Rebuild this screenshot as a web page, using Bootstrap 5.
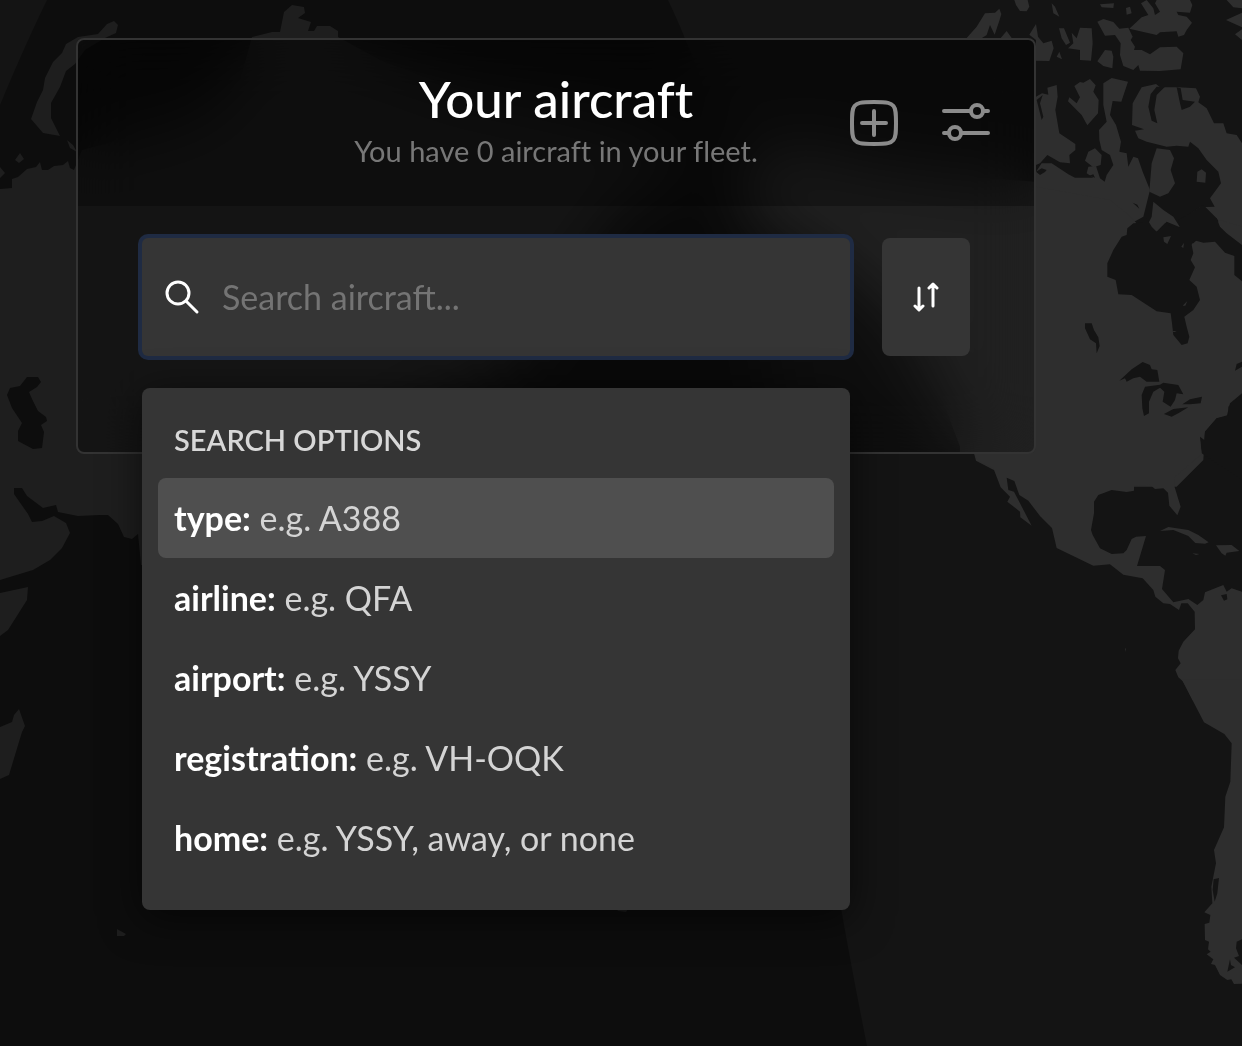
<!DOCTYPE html>
<html lang="en">
<head>
<meta charset="utf-8">
<meta name="viewport" content="width=device-width, initial-scale=1">
<title>Your aircraft</title>
<link href="https://cdn.jsdelivr.net/npm/bootstrap@5.3.0/dist/css/bootstrap.min.css" rel="stylesheet">
<style>
body{background:#141414;color:#fff;font-family:Lato,"Noto Sans",sans-serif;font-size:34px;line-height:40px;font-variant-ligatures:none}
.world{z-index:-1}
.world .land{fill:#2e2e2e}
.world .sea{fill:#141414}
.stage{padding:38px 76px}
.fleet{max-width:960px;border:2px solid #333;border-radius:8px;background:rgba(0,0,0,.3);backdrop-filter:blur(30px)}
.fleet-head{display:grid;grid-template-columns:1fr auto 1fr;min-height:166px;padding:0 44px;background:rgba(0,0,0,.3);border-radius:6px 6px 0 0}
.fleet-name{grid-column:2}
.fleet-title{font-size:51px;line-height:64px;font-weight:500}
.fleet-sub{font-size:29px;line-height:40px;color:#777}
.tool{width:48px;height:48px;padding:0;border:0;color:#8b8b8b}
.tools{gap:44px}
.fleet-body{padding:32px 64px 96px;gap:32px}
.finder{height:118px;padding:0 24px;gap:24px;background:#353535;border-radius:6px;box-shadow:0 0 0 4px #1f2b43}
.finder input,.finder input:focus{background:none;border:0;box-shadow:none;color:#fff;font-size:34px;line-height:40px;padding:0}
.finder input::placeholder{color:#747474;opacity:1}
.sorter{width:88px;height:118px;padding:0;background:#353535;border:0;border-radius:8px;color:#fff}
.options{top:100%;margin-top:32px;padding:32px 16px;background:#353535;border-radius:8px;box-shadow:0 8px 40px rgba(0,0,0,.6)}
.options-title{font-size:29px;line-height:40px;font-weight:600;color:#d8d8d8;padding:0 16px;margin-bottom:18px}
.option{height:80px;padding:0 16px;border:0;border-radius:8px!important;background:none;color:#d4d4d4}
.option b{color:#fff;font-weight:700}
.option.active{background:#4f4f4f;color:#d4d4d4}
</style>
</head>
<body class="min-vh-100 overflow-hidden">
<svg class="world position-fixed top-0 start-0 w-100 h-100" viewBox="0 0 1242 1046" preserveAspectRatio="xMinYMin slice" aria-hidden="true">
  <rect class="sea" width="1242" height="1046"/>
  <!-- Eurasia and Africa -->
  <g class="land">
    <path d="M0 189L12 188 12 179 18 177 27 169 36 167 40 162 42 170 48 170 54 166 63 165 68 161 70 168 74 170 82 150 120 140 200 120 240 80 252 37 272 32 280 32 284 12 292 5 304 7 305 13 298 18 311 22 308 31 314 31 317 26 330 26 338 31 338 37 380 60 460 90 560 110 640 130 690 150 680 180 620 200 600 240 570 270 540 330 490 380 440 400 400 420 330 480 280 560 200 570 141 565 138 534 132 539 124 537 118 524 108 515 100 515 78 516 58 512 56 505 43 508 27 496 22 488 14 488 14 494 28 514 32 522 42 521 54 516 66 523 70 533 62 548 50 560 33 570 0 580Z"/>
    <path d="M0 593L28 587 27 600 8 630 0 636ZM0 727L12 722 14 715 19 709 25 726 22 732 9 775 0 779Z"/>
    <path d="M78 37L98 34 107 24 114 21 118 25 116 33 105 38 85 50 75 64 66 71 60 87 51 103 51 118 60 136 43 133 31 119 37 102 43 90 45 78 53 62 62 53 66 44ZM67 140L73 145 77 152 70 148ZM15 160L20 153 24 159 19 163ZM0 167L5 173 0 178Z"/>
    <path d="M117 929L126 934 124 936 117 936ZM614 906L630 906 626 912 618 911Z"/>
  </g>
  <path class="sea" d="M27 377L38 377 41 382 37 387 29 392 32 399 38 411 46 417 47 421 41 425 44 432 42 448 33 449 18 441 18 431 22 423 12 408 7 395 10 388 20 386Z"/>
  <!-- North America, arctic coast and Baffin -->
  <g transform="translate(960 0) scale(.33333)">
    <g class="land">
      <path d="M-660 620L-640 500-500 430-300 490 0 530 228 545 228 515 245 490 275 490 325 523 345 533 400 533 380 520 385 500 408 498 420 535 434 545 440 525 460 495 450 465 425 450 418 420 417 390 440 365 430 315 430 250 455 234 504 245 484 305 458 303 450 345 468 375 483 425 478 455 500 460 505 500 520 470 534 475 548 515 570 570 550 650 505 675 480 720 440 800 440 890 0 1340-60 1180-180 960-390 770Z"/>
      <path d="M228 290L246 280 265 284 262 263 290 255 293 290 286 330 298 400 346 432 346 450 328 465 330 490 300 487 262 465 240 490 228 495Z"/>
      <path d="M343 258L360 246 370 248 390 237 407 256 400 275 416 300 414 340 382 376 365 345 324 304 328 292 350 310 360 292Z"/>
      <path d="M588 252L545 262 518 310 516 375 552 388 525 392 535 415 560 425 620 440 650 437 685 440 690 425 715 445 740 480 775 515 783 550 750 595 764 620 720 622 693 640 705 656 770 655 790 690 805 720 846 770 846 430 830 405 800 400 790 370 762 370 740 325 715 307 720 290 708 265 655 262 600 262Z"/>
      <path d="M590 445L630 450 642 475 632 510 645 550 625 580 600 590 568 575 575 490ZM580 605L610 630 640 650 660 682 620 665 590 695 560 680 575 650ZM712 515L725 508 738 518 736 548 710 545ZM385 455L405 445 425 465 422 495 400 502 375 482Z"/>
      <path d="M20 114L50 80 75 40 105 38 118 26 124 42 118 62 104 104 90 75 80 105 60 118 20 118ZM122 114L140 93 155 114ZM163 0L203 0 208 20 200 34 180 33 168 15ZM275 10L285 20 298 50 280 40ZM208 104L228 72 234 110 250 130 275 122 281 145 268 183 228 182 228 120ZM290 170L298 155 306 178ZM297 85L312 85 330 128 318 135 305 115ZM335 98L350 115 360 83 395 85 398 130 393 182 360 180 360 150 324 145 340 130Z"/>
      <path d="M412 65L430 57 460 66 478 86 505 83 518 110 512 120 525 140 522 150 545 150 570 163 600 142 650 140 670 160 662 208 600 213 540 212 535 195 520 210 490 198 480 165 482 130 465 105 435 107ZM412 184L435 150 455 152 460 170 457 205 430 198ZM420 13L462 10 460 24 425 22ZM498 24L510 20 515 40 500 44Z"/>
      <path d="M543 10L560 0 580 25 585 45 600 35 585 10 590 0 690 0 697 15 690 38 650 35 655 45 680 50 696 68 680 90 672 105 655 110 650 94 600 97 590 105 508 86 545 52 565 45ZM800 0L846 0 846 25 820 22ZM798 60L846 38 846 82ZM825 103L846 88 846 120Z"/>
    </g>
    <g class="sea">
      <path d="M590 260L615 260 590 285 583 330 592 370 575 362 565 320 572 282ZM650 262L662 265 668 300 705 305 690 320 665 330 660 310ZM228 515L245 505 260 510 255 516 240 525ZM388 527L400 523 405 533ZM518 608L532 614 538 626ZM248 285L240 310 250 350 245 360 230 300Z"/>
    </g>
  </g>
  <!-- North America, Hudson Bay and the Great Lakes -->
  <g transform="translate(960 220) scale(.33333)">
    <path class="land" d="M228-100L450-60 500-20 600 80 700 70 780 0 846 20 846 520 810 550 800 590 770 595 735 635 730 720 650 800 300 800 100 749 48 722 42 700 0 700 0 100Z"/>
    <g class="sea">
      <path d="M500 45L502 25 520 10 545 8 560-5 575 20 590 35 615 10 640 22 660 22 655 0 690-20 730-45 770-5 780 20 800 40 846 75 846 184 823 165 823 108 795 98 765 65 730 68 700 60 695 75 700 100 692 120 705 142 688 180 710 200 720 240 700 270 673 290 680 320 688 350 683 370 665 375 640 345 636 310 632 280 590 274 515 225 475 223 467 180 442 170 442 130 460 90 485 50Z"/>
      <path d="M375 310L395 310 402 330 415 352 419 378 410 400 408 370 390 358 375 325ZM478 482L515 448 548 426 570 435 575 448 592 450 598 485 560 485 540 470 520 475 500 485 495 475ZM545 525L555 500 600 494 610 488 655 495 670 523 650 520 645 540 632 560 608 545 613 515 600 503 580 515 567 545 567 580 552 588 547 565ZM667 553L690 538 726 530 722 550 690 553ZM612 582L640 567 685 562 655 580 635 590ZM825 452L830 432 846 425 846 440ZM846 525L825 540 805 560 805 585 770 595 735 635 733 660 720 650 725 700 846 780Z"/>
    </g>
    <path class="land" d="M610 52L633 48 622 72 612 65ZM664 80L672 68 670 84ZM668 257L682 243 676 257ZM636 333L650 333 642 337Z"/>
  </g>
  <!-- Mexico, the Caribbean and Colombia -->
  <g transform="translate(960 440) scale(.33333)">
    <g class="land">
      <path d="M42 40L54 62 100 85 122 142 150 170 142 185 180 215 181 232 215 257 180 190 162 155 145 150 140 113 163 123 178 165 205 182 240 228 276 264 290 324 400 377 450 373 490 404 548 415 580 450 586 470 610 490 630 492 657 510 664 490 683 490 704 515 705 568 670 605 656 632 654 655 662 670 646 690 655 712 670 725 698 780 846 780 846 455 815 445 800 455 790 435 735 457 730 480 712 495 685 477 640 487 606 447 615 390 600 378 531 378 558 288 528 290 515 297 500 330 490 340 455 342 420 325 398 285 393 270 402 220 402 185 415 165 455 150 500 156 522 152 522 138 570 134 585 147 610 145 624 158 628 197 652 226 662 200 642 135 645 110 725 42 720 0 42 0Z"/>
      <path d="M600 273L625 261 685 270 715 285 746 307 735 311 706 309 685 288 640 270ZM768 316L815 315 838 333 800 338 796 347 785 340ZM697 340L718 342 708 345ZM495 625L498 626 497 636Z"/>
    </g>
    <path class="sea" d="M783 466L800 462 802 478 792 482Z"/>
  </g>
  <!-- South America, Pacific coast -->
  <g transform="translate(1120 680) scale(.33333)">
    <path class="land" d="M185-2L220 65 252 127 313 162 335 190 331 305 316 350 312 442 282 510 288 550 274 620 277 670 253 697 271 705 268 728 254 732 255 780 267 785 264 808 272 815 260 823 280 838 273 852 285 855 300 885 322 900 334 898 342 912 366 911 366-2Z"/>
    <path class="sea" d="M281 598L297 594 292 640 284 665 278 630ZM366 778L350 785 348 805 357 828 342 833 366 855ZM330 838L333 855 345 862 322 875Z"/>
  </g>
  <!-- Night side of the terminator -->
  <path d="M47 0L668 0C740 150 785 400 800 600C812 750 838 900 867 1046L0 1046 0 105Q25 45 47 0Z" fill-opacity=".35"/>
</svg>

<main class="stage">
  <section class="fleet w-100">
    <header class="fleet-head align-items-center">
      <div class="fleet-name text-center pb-2">
        <h1 class="fleet-title m-0">Your aircraft</h1>
        <p class="fleet-sub m-0">You have 0 aircraft in your fleet.</p>
      </div>
      <div class="tools d-flex justify-content-end">
        <button class="btn tool d-flex" type="button" aria-label="Add aircraft">
          <svg width="48" height="48" fill="none" stroke="currentColor" stroke-width="4" stroke-linecap="round"><path d="M24 3C38 3 41 4 43.500 7S46 15 46 24 46 38 43.500 41 38 45 24 45 7 44 4.500 41 2 33 2 24 2 10 4.500 7 10 3 24 3ZM24 12V36M12 24H36"/></svg>
        </button>
        <button class="btn tool d-flex" type="button" aria-label="Filters">
          <svg width="48" height="48" fill="none" stroke="currentColor" stroke-width="4" stroke-linecap="round"><path d="M2 12H29M41 12H46M2 34H7M19 34H46"/><circle cx="35" cy="12" r="6"/><circle cx="13" cy="34" r="6"/></svg>
        </button>
      </div>
    </header>
    <div class="fleet-body d-flex">
      <div class="position-relative flex-grow-1">
        <div class="finder d-flex align-items-center">
          <label for="search" class="d-flex" aria-label="Search"><svg width="32" height="32" fill="none" stroke="#fff" stroke-width="3" stroke-linecap="round" overflow="visible"><circle cx="12" cy="12" r="11"/><path d="M20 20L31 31"/></svg></label>
          <input id="search" class="form-control" type="text" placeholder="Search aircraft..." autocomplete="off">
        </div>
        <div class="options position-absolute start-0 w-100">
          <h2 class="options-title">SEARCH OPTIONS</h2>
          <div class="list-group">
            <button type="button" class="option active list-group-item list-group-item-action"><b>type:</b> e.g. A388</button>
            <button type="button" class="option list-group-item list-group-item-action"><b>airline:</b> e.g. QFA</button>
            <button type="button" class="option list-group-item list-group-item-action"><b>airport:</b> e.g. YSSY</button>
            <button type="button" class="option list-group-item list-group-item-action"><b>registration:</b> e.g. VH-OQK</button>
            <button type="button" class="option list-group-item list-group-item-action"><b>home:</b> e.g. YSSY, away, or none</button>
          </div>
        </div>
      </div>
      <button class="btn sorter d-flex align-items-center justify-content-center" type="button" aria-label="Sort">
        <svg width="26" height="30" fill="none" stroke="currentColor" stroke-width="3" stroke-linecap="round" stroke-linejoin="round"><path d="M6 6V27M2 24L6 28 10 24M20 24V3M16 6L20 2 24 6"/></svg>
      </button>
    </div>
  </section>
</main>
<script src="https://cdn.jsdelivr.net/npm/bootstrap@5.3.0/dist/js/bootstrap.bundle.min.js"></script>
</body>
</html>
